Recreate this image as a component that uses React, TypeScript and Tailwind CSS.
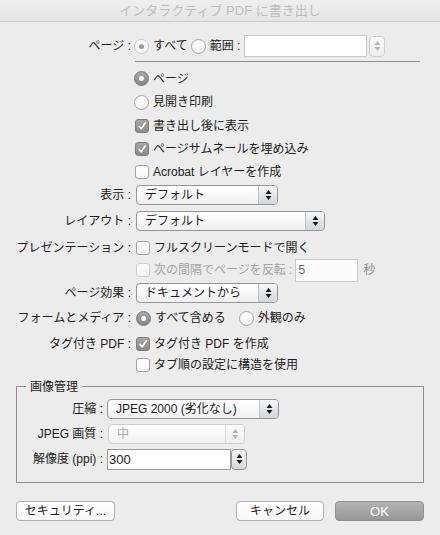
import type { ReactNode } from "react";

function Arrows({ disabled }: { disabled?: boolean }) {
  const c = disabled ? "#b4b4b4" : "#1a1a1a";
  return (
    <svg width="7" height="12" viewBox="0 0 7 12">
      <path d="M3.5 1 L6.5 5 L0.5 5 Z" fill={c} />
      <path d="M3.5 11 L6.5 7 L0.5 7 Z" fill={c} />
    </svg>
  );
}

function Radio({ on, disabled }: { on?: boolean; disabled?: boolean }) {
  if (on && !disabled)
    return (
      <span className="flex h-[15px] w-[15px] shrink-0 items-center justify-center rounded-full border border-[#777] bg-gradient-to-b from-[#a8a8a8] to-[#868686]">
        <span className="block h-[5px] w-[5px] rounded-full bg-white" />
      </span>
    );
  if (on)
    return (
      <span className="flex h-[15px] w-[15px] shrink-0 items-center justify-center rounded-full border border-[#c4c4c4] bg-gradient-to-b from-white to-[#f3f3f3]">
        <span className="block h-[5px] w-[5px] rounded-full bg-[#9c9c9c]" />
      </span>
    );
  return (
    <span
      className={`block h-[15px] w-[15px] shrink-0 rounded-full border bg-gradient-to-b from-white to-[#f4f4f4] ${
        disabled ? "border-[#c8c8c8]" : "border-[#a4a4a4]"
      }`}
    />
  );
}

function Check({ on, disabled }: { on?: boolean; disabled?: boolean }) {
  if (on)
    return (
      <span className="flex h-[14px] w-[14px] shrink-0 items-center justify-center rounded-[3px] border border-[#7f7f7f] bg-gradient-to-b from-[#a6a6a6] to-[#8a8a8a]">
        <svg width="10" height="10" viewBox="0 0 10 10">
          <path d="M2 5.3 L4.2 7.8 L8.2 2" stroke="white" strokeWidth="1.6" fill="none" strokeLinecap="round" strokeLinejoin="round" />
        </svg>
      </span>
    );
  return (
    <span
      className={`block h-[14px] w-[14px] shrink-0 rounded-[3px] border bg-gradient-to-b ${
        disabled ? "border-[#d0d0d0] from-[#fafafa] to-[#f2f2f2]" : "border-[#a2a2a2] from-white to-[#f6f6f6]"
      }`}
    />
  );
}

function Select({ value, w, disabled }: { value: string; w: string; disabled?: boolean }) {
  return (
    <div
      className={`flex h-[20px] ${w} items-stretch rounded-[4px] border bg-gradient-to-b from-white to-[#f0f0f0] ${
        disabled ? "border-[#cdcdcd] text-[#a8a8a8]" : "border-[#969696]"
      }`}
    >
      <span className="flex flex-1 items-center pl-[8px]">{value}</span>
      <span
        className={`flex w-[19px] items-center justify-center rounded-r-[3px] border-l bg-gradient-to-b ${
          disabled ? "border-[#dadada] from-[#fafafa] to-[#efefef]" : "border-[#c2c2c2] from-[#f6f7f9] to-[#d3d6da]"
        }`}
      >
        <Arrows disabled={disabled} />
      </span>
    </div>
  );
}

function Stepper({ disabled }: { disabled?: boolean }) {
  return (
    <span
      className={`flex h-[21px] w-[16px] shrink-0 items-center justify-center rounded-[4px] border bg-gradient-to-b ${
        disabled ? "border-[#cfcfcf] from-[#fbfbfb] to-[#ededed]" : "border-[#969696] from-[#f6f7f9] to-[#d3d6da]"
      }`}
    >
      <Arrows disabled={disabled} />
    </span>
  );
}

function Row({ label, h, children }: { label?: string; h: string; children: ReactNode }) {
  return (
    <div className={`flex ${h} items-center`}>
      <span className="w-[131px] shrink-0 text-right">{label}</span>
      <div className="ml-[5px] flex items-center">{children}</div>
    </div>
  );
}

function GRow({ label, children }: { label: string; children: ReactNode }) {
  return (
    <div className="flex h-[22px] items-center">
      <span className="w-[86px] shrink-0 text-right">{label}</span>
      <div className="ml-[4px] flex items-center">{children}</div>
    </div>
  );
}

export default function App() {
  return (
    <div className="flex h-[535px] w-[440px] flex-col overflow-hidden bg-[#ececec] font-['Liberation_Sans','Noto_Sans_CJK_JP',sans-serif] text-[12px] leading-none text-[#1c1c1c]">
      <div className="flex h-[22px] shrink-0 items-center justify-center border-b border-[#cbcbcb] bg-gradient-to-b from-[#efefef] to-[#e4e4e4] text-[13px] text-[#bdbdbd]">
        インタラクティブ PDF に書き出し
      </div>

      <div className="mt-[13px] flex h-[22px] items-center">
        <span className="w-[131px] shrink-0 text-right">ページ :</span>
        <div className="ml-[3px] flex items-center">
          <Radio on disabled />
          <span className="ml-[4px]">すべて</span>
          <span className="ml-[3px] flex"><Radio /></span>
          <span className="ml-[4px]">範囲 :</span>
          <div className="ml-[4px] flex items-center gap-[2px]">
            <div className="h-[22px] w-[123px] border border-[#c8c8c8] bg-white" />
            <Stepper disabled />
          </div>
        </div>
      </div>

      <div className="flex h-[10px] items-start pt-[4px]">
        <div className="ml-[135px] h-px w-[285px] bg-[#8e8e8e]" />
      </div>

      <div className="flex h-[23px] items-center pl-[134px]">
        <Radio on />
        <span className="ml-[4px]">ページ</span>
      </div>
      <div className="flex h-[24px] items-center pl-[134px]">
        <Radio />
        <span className="ml-[4px]">見開き印刷</span>
      </div>
      <div className="flex h-[23px] items-center pl-[135px]">
        <Check on />
        <span className="ml-[4px]">書き出し後に表示</span>
      </div>
      <div className="flex h-[24px] items-center pl-[135px]">
        <Check on />
        <span className="ml-[4px]">ページサムネールを埋め込み</span>
      </div>
      <div className="flex h-[22px] items-center pl-[135px]">
        <Check />
        <span className="ml-[4px]">Acrobat レイヤーを作成</span>
      </div>

      <Row label="表示 :" h="h-[23px]">
        <Select value="デフォルト" w="w-[142px]" />
      </Row>
      <Row label="レイアウト :" h="h-[30px]">
        <Select value="デフォルト" w="w-[189px]" />
      </Row>
      <Row label="プレゼンテーション :" h="h-[23px]">
        <Check />
        <span className="ml-[4px]">フルスクリーンモードで開く</span>
      </Row>
      <Row h="h-[22px]">
        <Check disabled />
        <span className="ml-[4px] text-[#a3a3a3]">次の間隔でページを反転 :</span>
        <span className="ml-[3px] flex h-[23px] w-[63px] items-center border border-[#cacaca] bg-[#fbfbfb] pl-[2px] text-[#6a6a6a]">5</span>
        <span className="ml-[5px] text-[#8a8a8a]">秒</span>
      </Row>
      <Row label="ページ効果 :" h="h-[24px]">
        <Select value="ドキュメントから" w="w-[142px]" />
      </Row>
      <Row label="フォームとメディア :" h="h-[26px]">
        <Radio on />
        <span className="ml-[4px]">すべて含める</span>
        <span className="ml-[13px] flex"><Radio /></span>
        <span className="ml-[4px]">外観のみ</span>
      </Row>
      <Row label="タグ付き PDF :" h="h-[26px]">
        <Check on />
        <span className="ml-[4px]">タグ付き PDF を作成</span>
      </Row>
      <Row h="h-[16px]">
        <Check />
        <span className="ml-[4px]">タブ順の設定に構造を使用</span>
      </Row>

      <div className="relative mx-[16px] mt-[13px] h-[97px] border border-[#8e8e8e] pt-[11px]">
        <span className="absolute left-[9px] top-[-8px] bg-[#ececec] px-[4px] leading-[16px]">画像管理</span>
        <div className="flex flex-col gap-[3px]">
          <GRow label="圧縮 :">
            <Select value="JPEG 2000 (劣化なし)" w="w-[172px]" />
          </GRow>
          <GRow label="JPEG 画質 :">
            <span className="ml-[1px] flex"><Select value="中" w="w-[137px]" disabled /></span>
          </GRow>
          <GRow label="解像度 (ppi) :">
            <div className="flex items-center">
              <span className="flex h-[21px] w-[124px] items-center border border-[#9a9a9a] bg-white pl-[1px] text-[13px]">300</span>
              <Stepper />
            </div>
          </GRow>
        </div>
      </div>

      <div className="mx-[16px] mt-[18px] flex h-[20px] items-stretch">
        <button className="flex w-[99px] items-center justify-center rounded-[4px] border border-[#b0b0b0] bg-gradient-to-b from-white to-[#f7f7f7]">
          セキュリティ...
        </button>
        <button className="ml-auto flex w-[88px] items-center justify-center rounded-[4px] border border-[#b0b0b0] bg-gradient-to-b from-white to-[#f7f7f7]">
          キャンセル
        </button>
        <button className="ml-[11px] flex w-[89px] items-center justify-center rounded-[4px] border border-[#8f8f8f] bg-gradient-to-b from-[#b4b4b4] to-[#979797] text-[13px] text-white">
          OK
        </button>
      </div>
    </div>
  );
}
